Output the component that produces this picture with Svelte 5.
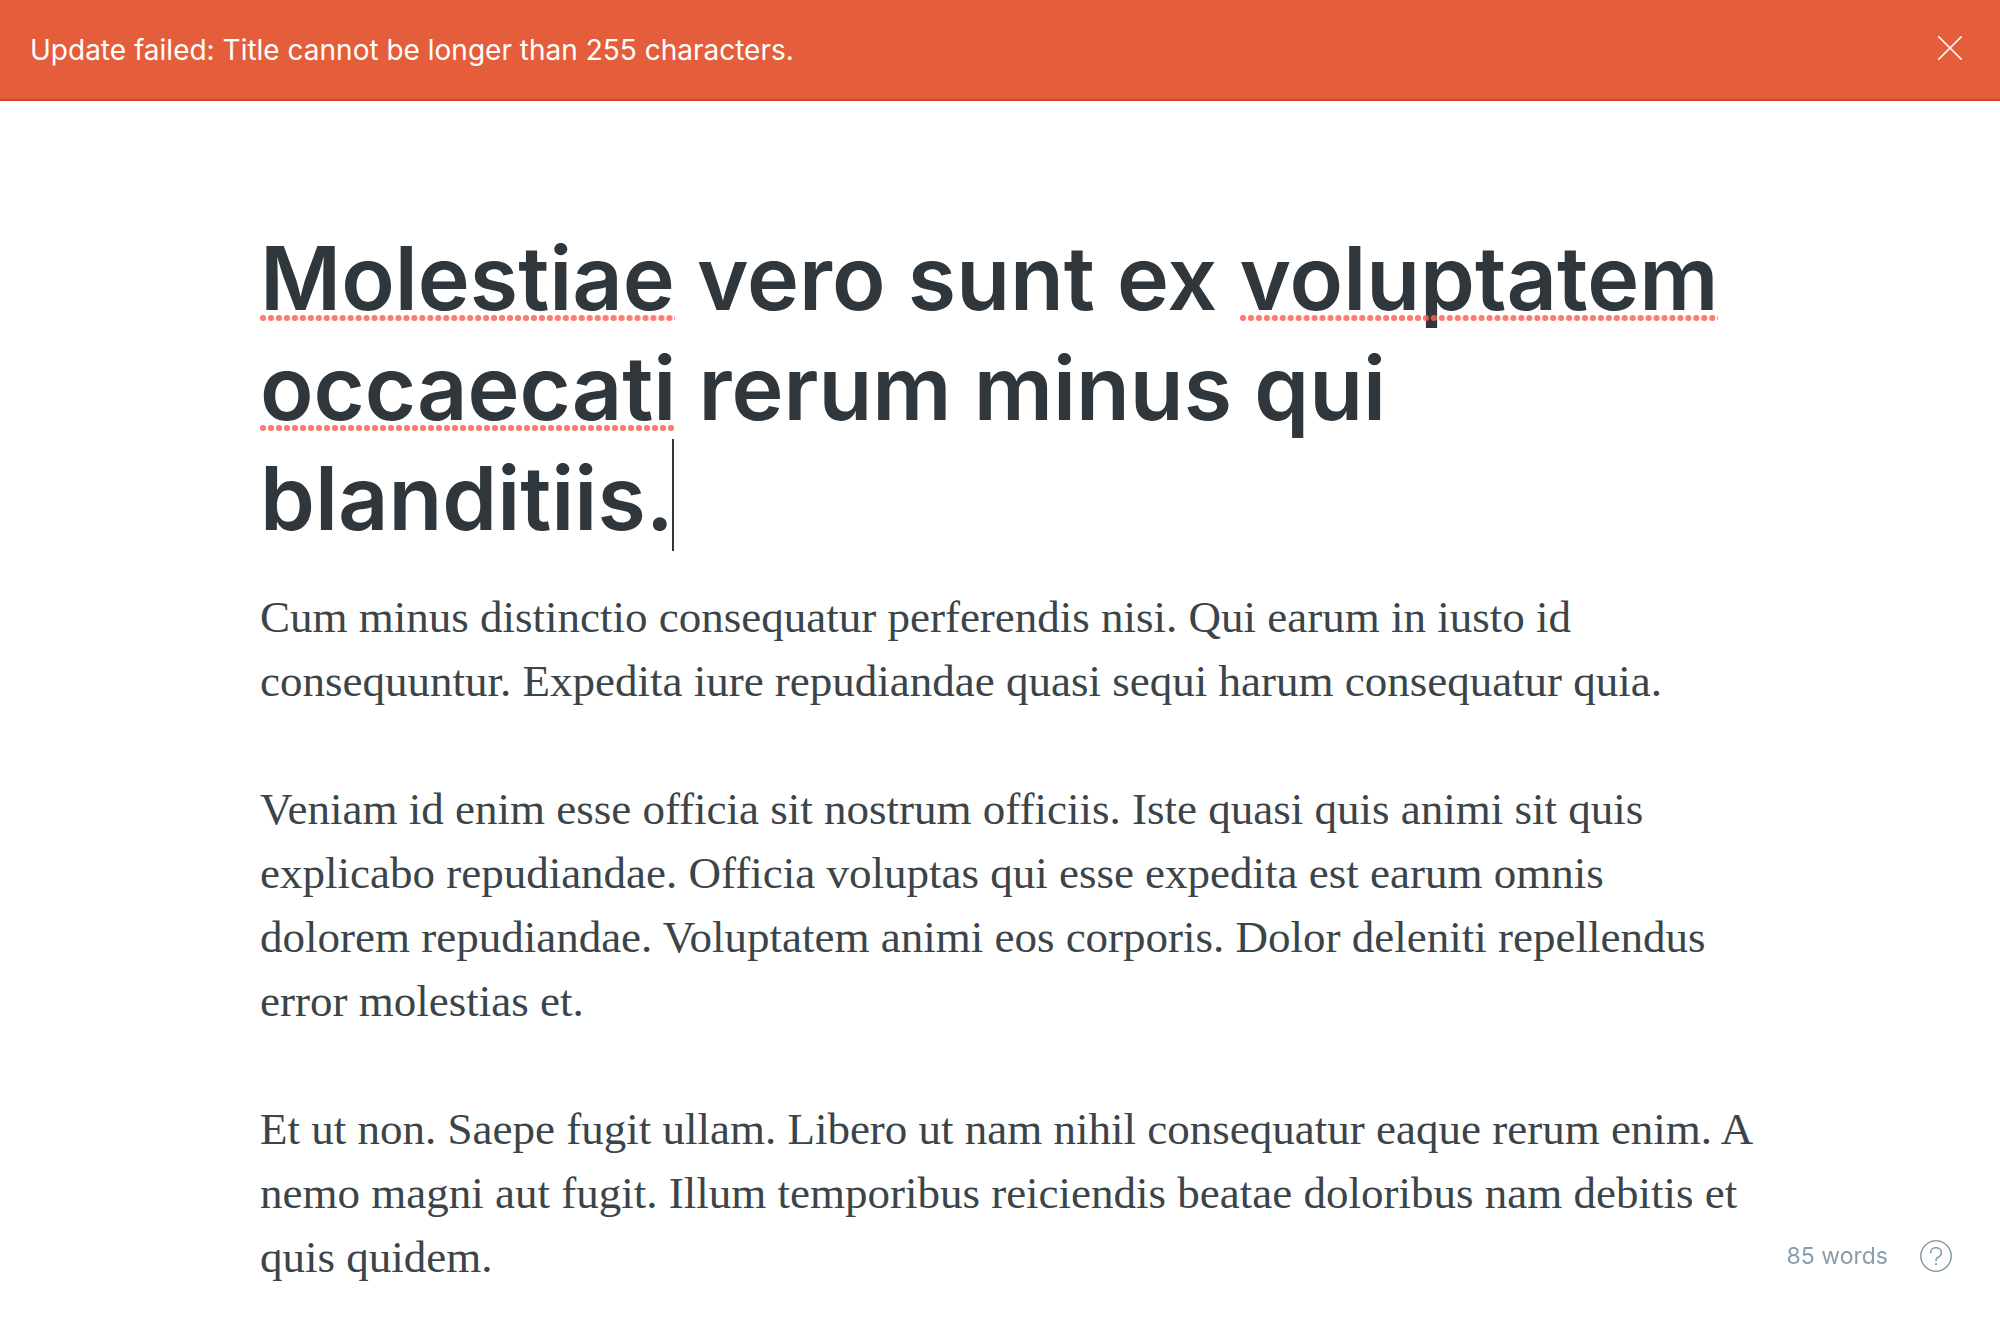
<script>
  let alertOpen = $state(true);

  const title = [
    { text: 'Molestiae', misspelt: true },
    { text: ' vero sunt ex ' },
    { text: 'voluptatem', misspelt: true },
    { text: ' ' },
    { text: 'occaecati', misspelt: true },
    { text: ' rerum minus qui blanditiis.' }
  ];

  const paragraphs = [
    'Cum minus distinctio consequatur perferendis nisi. Qui earum in iusto id consequuntur. Expedita iure repudiandae quasi sequi harum consequatur quia.',
    'Veniam id enim esse officia sit nostrum officiis. Iste quasi quis animi sit quis explicabo repudiandae. Officia voluptas qui esse expedita est earum omnis dolorem repudiandae. Voluptatem animi eos corporis. Dolor deleniti repellendus error molestias et.',
    'Et ut non. Saepe fugit ullam. Libero ut nam nihil consequatur eaque rerum enim. A nemo magni aut fugit. Illum temporibus reiciendis beatae doloribus nam debitis et quis quidem.'
  ];
</script>

<div class="editor">
  {#if alertOpen}
    <div class="alert" role="alert">
      <span class="message">Update failed: Title cannot be longer than 255 characters.</span>
      <button class="close" aria-label="Close" onclick={() => (alertOpen = false)}>
        <svg viewBox="0 0 24 24" width="24" height="24" aria-hidden="true">
          <path d="M.7.7l22.6 22.6M23.3.7L.7 23.3" fill="none" stroke="currentColor" stroke-width="1.6" stroke-linecap="round" />
        </svg>
      </button>
    </div>
  {/if}

  <main>
    <h1 contenteditable="true" spellcheck="false">{#each title as part}{#if part.misspelt}<span class="misspelt">{part.text}</span>{:else}{part.text}{/if}{/each}<span class="caret"></span></h1>
    <article contenteditable="true" spellcheck="false">
      {#each paragraphs as paragraph}
        <p>{paragraph}</p>
      {/each}
    </article>
  </main>

  <footer>
    <span>85 words</span>
    <button class="help" aria-label="Help">
      <svg viewBox="0 0 32 32" width="32" height="32" fill="none" stroke="currentColor" stroke-width="1.6" aria-hidden="true">
        <circle cx="16" cy="16" r="15.2" />
        <path d="M10.6 12.8c0-3 2.3-5.2 5.4-5.2s5.4 2.2 5.4 5.1c0 2.3-1.3 3.5-2.9 4.2-1.6.7-2.5 1.5-2.5 3.1v.8" stroke-linecap="round" />
        <circle cx="16" cy="24.2" r="1.1" fill="currentColor" stroke="none" />
      </svg>
    </button>
  </footer>
</div>

<style>
  :global(body) {
    background: #fff;
  }
  .editor {
    min-height: 100vh;
    font-family: Inter, 'Liberation Sans', sans-serif;
    color: #2f373c;
  }
  .alert {
    display: flex;
    align-items: flex-start;
    justify-content: space-between;
    padding: 25px 32px 24px 30px;
    border-bottom: 2px solid #d84320;
    background: #e55e3b;
    color: #fff;
    font-size: 28px;
    line-height: 50px;
  }
  button {
    display: flex;
    padding: 0;
    border: 0;
    background: none;
    color: inherit;
    cursor: pointer;
  }
  .close {
    padding: 11px 6px;
  }
  main {
    box-sizing: border-box;
    max-width: 1528px;
    margin: 0 auto;
    padding: 122px 24px 0;
  }
  h1,
  article {
    outline: none;
  }
  h1 {
    margin: 0 0 32px;
    font-size: 88px;
    font-weight: 600;
    line-height: 110px;
  }
  .misspelt,
  .caret {
    position: relative;
  }
  .misspelt::after {
    content: '';
    position: absolute;
    left: 0;
    right: 0;
    bottom: 10px;
    height: 6px;
    background: radial-gradient(circle at 3px 3px, #ff5e50d0 2.8px, transparent 3.3px) 0 0 / 8px 6px round;
  }
  .caret::after {
    content: '';
    position: absolute;
    bottom: 0;
    left: -2px;
    width: 2px;
    height: 112px;
    background: #2f373c;
  }
  /* The serif text runs slightly into the right-hand gutter. */
  article {
    margin-right: -16px;
    color: #3a4449;
    font-family: Georgia, 'Liberation Serif', serif;
    font-size: 45px;
    line-height: 64px;
  }
  p {
    margin: 0;
  }
  p + p {
    margin-top: 64px;
  }
  footer {
    position: fixed;
    right: 48px;
    bottom: 48px;
    display: flex;
    align-items: center;
    gap: 32px;
    color: #8a9dab;
    font-size: 23px;
    line-height: 32px;
  }
</style>
